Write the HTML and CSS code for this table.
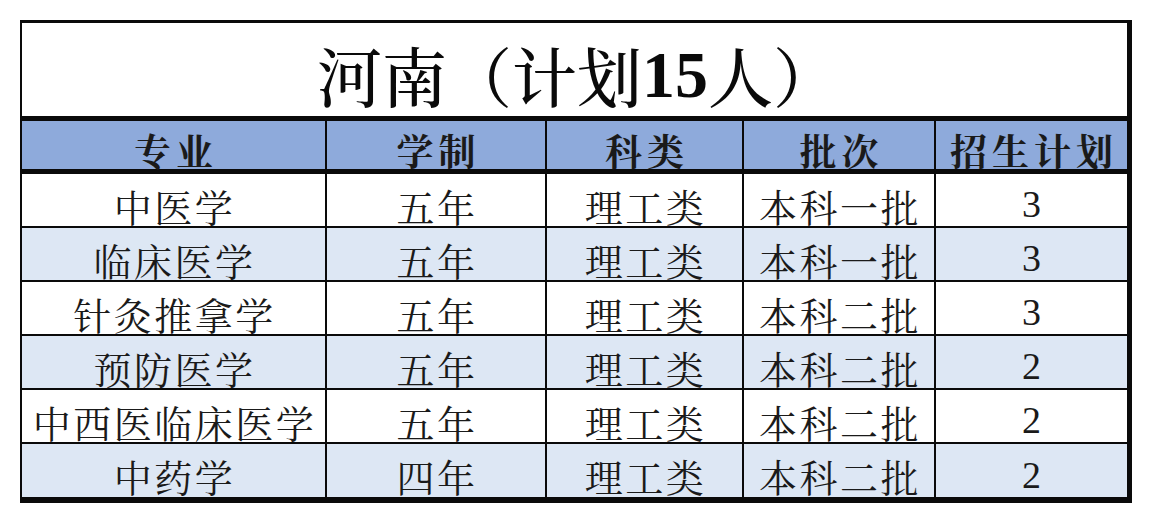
FILE: index.html
```html
<!DOCTYPE html>
<html lang="zh-CN">
<head>
<meta charset="utf-8">
<title>河南（计划15人）</title>
<link rel="stylesheet" href="styles.css">
</head>
<body>
<div class="sheet">
  <div class="title">河南<span class="paren">（</span>计划<b class="num">15</b>人<span class="paren">）</span></div>
  <div class="grid head">
    <div class="cell">专业</div>
    <div class="cell">学制</div>
    <div class="cell">科类</div>
    <div class="cell">批次</div>
    <div class="cell">招生计划</div>
  </div>
  <div class="grid body">
    <div class="cell">中医学</div><div class="cell">五年</div><div class="cell">理工类</div><div class="cell">本科一批</div><div class="cell n">3</div>
    <div class="cell alt">临床医学</div><div class="cell alt">五年</div><div class="cell alt">理工类</div><div class="cell alt">本科一批</div><div class="cell alt n">3</div>
    <div class="cell">针灸推拿学</div><div class="cell">五年</div><div class="cell">理工类</div><div class="cell">本科二批</div><div class="cell n">3</div>
    <div class="cell alt">预防医学</div><div class="cell alt">五年</div><div class="cell alt">理工类</div><div class="cell alt">本科二批</div><div class="cell alt n">2</div>
    <div class="cell">中西医临床医学</div><div class="cell">五年</div><div class="cell">理工类</div><div class="cell">本科二批</div><div class="cell n">2</div>
    <div class="cell alt">中药学</div><div class="cell alt">四年</div><div class="cell alt">理工类</div><div class="cell alt">本科二批</div><div class="cell alt n">2</div>
  </div>
</div>
</body>
</html>
```

FILE: styles.css
```css
html, body {
  margin: 0;
  padding: 0;
  background: #ffffff;
}

body {
  font-family: "Noto Serif CJK SC", "Noto Sans CJK SC", sans-serif;
  color: #111111;
}

.sheet {
  margin: 20px 0 0 20px;
  width: 1105px;
  border-left: 2px solid #0a0a0a;
  border-top: 3px solid #0a0a0a;
  border-right: 5px solid #0a0a0a;
  border-bottom: 6px solid #0a0a0a;
  background: #0a0a0a;
}

.title {
  height: 98px;
  box-sizing: border-box;
  padding-top: 10px;
  padding-left: 6px;
  background: #ffffff;
  border-bottom: 5px solid #0a0a0a;
  display: flex;
  align-items: center;
  justify-content: center;
  font-size: 65px;
  font-weight: 500;
  line-height: 1;
  color: #0a0a0a;
}

.title .num {
  font-family: "Liberation Serif", serif;
  font-weight: 700;
  font-size: 66px;
}

.grid {
  display: grid;
  grid-template-columns: 303px 218px 195px 190px 191px;
  column-gap: 2px;
  background: #0a0a0a;
}

.head {
  height: 47px;
  border-bottom: 6px solid #0a0a0a;
}

.head .cell {
  background: #8eaadb;
  font-size: 37px;
  font-weight: 700;
  letter-spacing: 5px;
  padding-left: 5px;
  padding-top: 11px;
  color: #1a1a1a;
}

.body {
  grid-template-rows: repeat(5, 52px) 53px;
  row-gap: 2px;
}

.cell {
  background: #ffffff;
  display: flex;
  align-items: center;
  justify-content: center;
  box-sizing: border-box;
  line-height: 1;
  white-space: nowrap;
}

.body .cell {
  font-size: 38px;
  letter-spacing: 2.5px;
  padding-left: 2px;
  padding-top: 11px;
  color: #1a1a1a;
}

.body .cell.alt {
  background: #dde7f4;
}

.body .cell.n {
  font-family: "Liberation Serif", serif;
  font-size: 38px;
  letter-spacing: 0;
  padding-left: 0;
  padding-top: 8px;
}
```
